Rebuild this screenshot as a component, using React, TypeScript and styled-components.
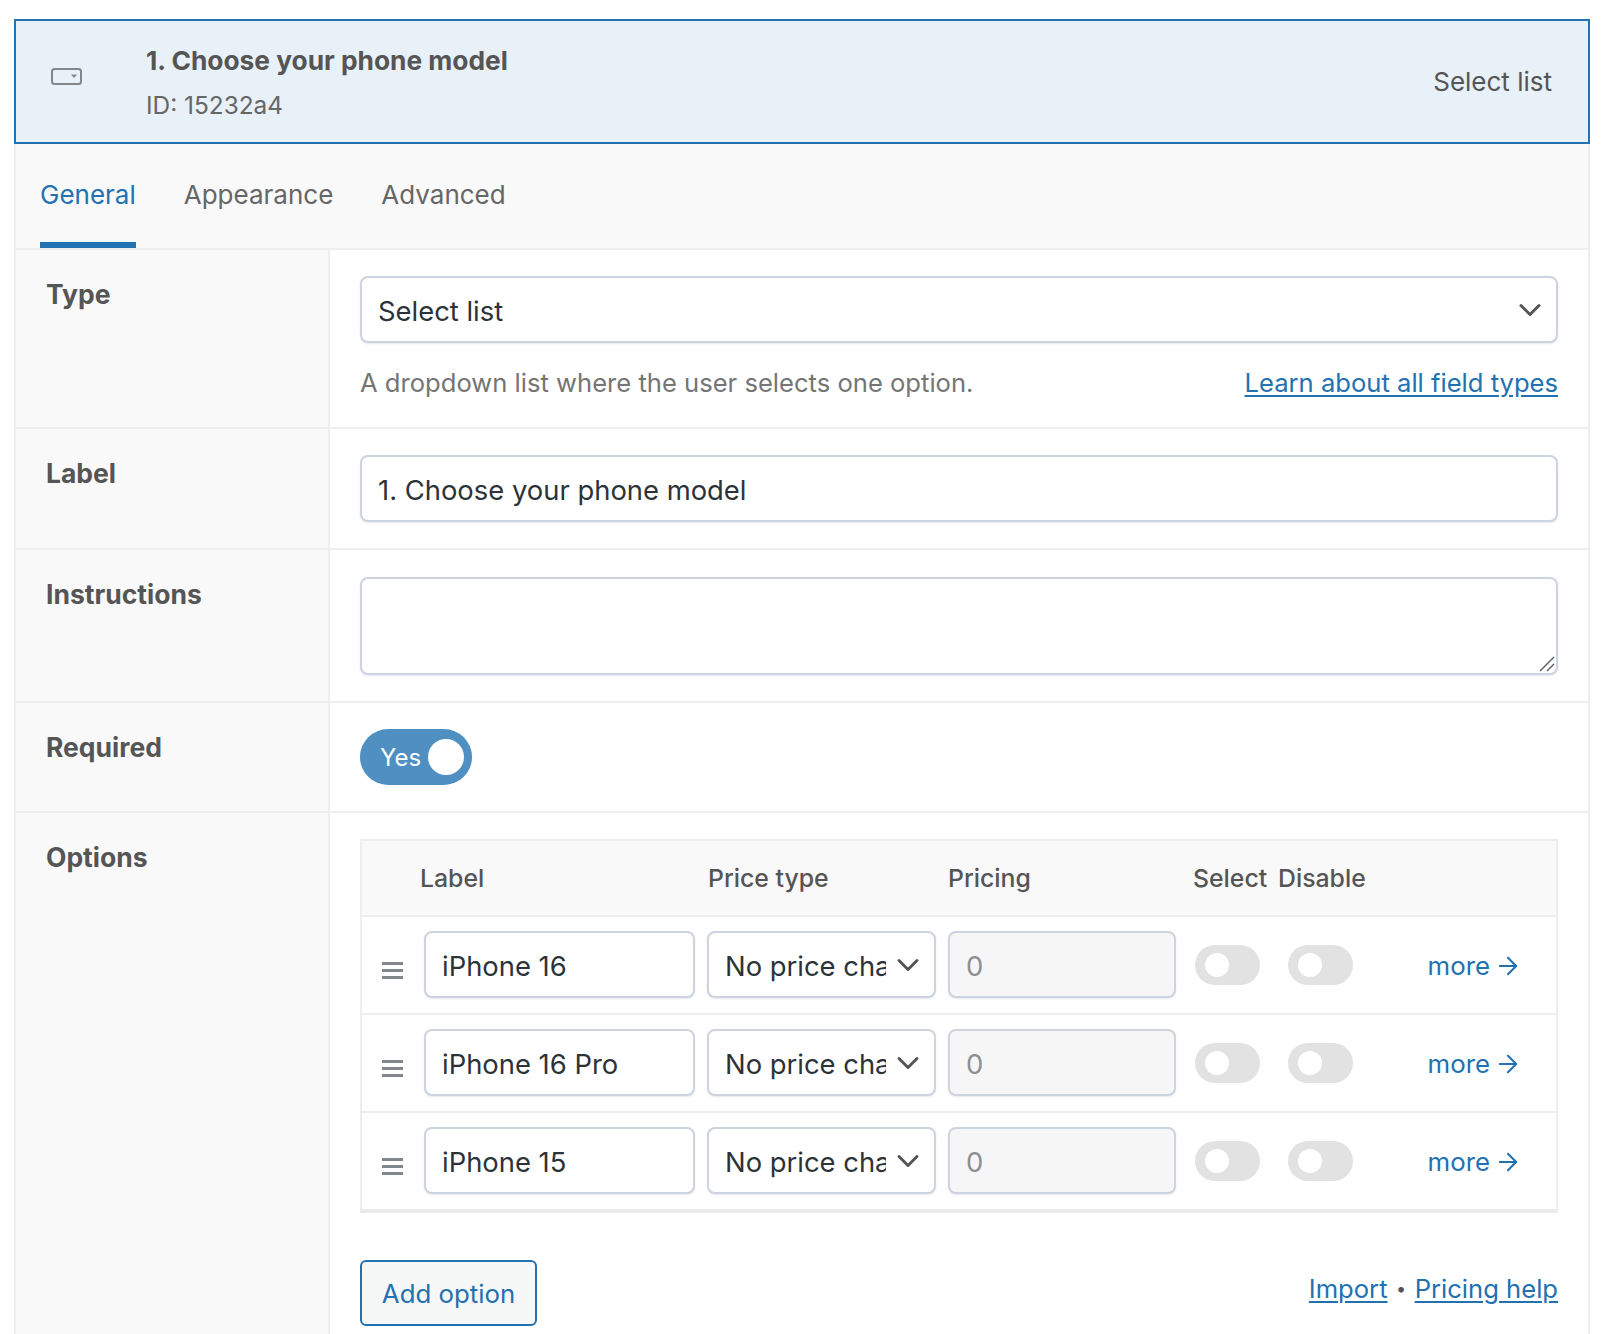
import React from 'react';
import styled, { createGlobalStyle } from 'styled-components';
import { ChevronDown, ArrowRight } from 'lucide-react';

const Global = createGlobalStyle`
  html, body {
    margin: 0;
    height: 1334px;
    overflow: hidden;
    background: #fff;
  }
  body {
    font-family: Inter, 'Noto Sans', sans-serif;
    font-size: 27px;
    color: #555;
    -webkit-font-smoothing: antialiased;
  }
  * { box-sizing: border-box; }
`;

const Page = styled.div`
  padding: 19px 14px 0 14px;
`;

const FieldHeader = styled.div`
  display: flex;
  align-items: center;
  height: 125px;
  padding: 0 36px 0 35px;
  background: #e8f0f8;
  border: 2px solid #2271b1;
  color: #555;
`;

const FieldIcon = styled.svg`
  width: 31px;
  height: 17px;
  margin: 0 64px 10px 0;
  flex: none;
`;

const FieldTitle = styled.div`
  flex: 1;
  display: flex;
  flex-direction: column;
  gap: 13px;
  margin-top: 2px;

  strong {
    font-size: 26.3px;
    font-weight: 700;
    line-height: 32px;
  }
  span {
    font-size: 24.4px;
    line-height: 30px;
    color: #666;
  }
`;

const FieldType = styled.div`
  font-size: 26px;
  color: #555;
`;

const Panel = styled.div`
  border-left: 2px solid #eeeeee;
  border-right: 2px solid #eeeeee;
  background: #fff;
`;

const Tabs = styled.div`
  display: flex;
  gap: 48px;
  height: 106px;
  padding: 0 24px;
  background: #f9f9f9;
  border-bottom: 2px solid #eeeeee;
`;

const Tab = styled.div<{ $active?: boolean }>`
  display: flex;
  align-items: center;
  height: 100%;
  padding-top: 2px;
  font-size: 26px;
  color: ${p => (p.$active ? '#2271b1' : '#666')};
  border-bottom: 6px solid ${p => (p.$active ? '#2271b1' : 'transparent')};
`;

const Row = styled.div`
  display: grid;
  grid-template-columns: 314px 1fr;
  border-bottom: 2px solid #eeeeee;
`;

const RowLabel = styled.div`
  padding: 24px 30px;
  background: #f9f9f9;
  border-right: 2px solid #eeeeee;
  font-size: 26.5px;
  font-weight: 700;
  line-height: 40px;
  color: #555;
`;

const RowBody = styled.div<{ $top?: number }>`
  padding: ${p => p.$top ?? 26}px 30px 26px 30px;
`;

const inputBase = `
  display: block;
  width: 100%;
  height: 67px;
  padding: 3px 16px 0;
  font-family: Inter, 'Noto Sans', sans-serif;
  font-size: 27.4px;
  color: #2c3338;
  background: #fff;
  border: 2px solid #cdd4e0;
  border-radius: 8px;
  box-shadow: 0 1px 2px rgba(180, 190, 205, 0.35);
  outline: none;
`;

const TextInput = styled.input`
  ${inputBase}
  &:disabled {
    background: #f6f6f6;
    color: #8c8f94;
    opacity: 1;
  }
`;

const AreaWrap = styled.div`
  position: relative;

  svg {
    position: absolute;
    right: 2px;
    bottom: 2px;
    pointer-events: none;
  }
`;

const TextArea = styled.textarea`
  ${inputBase}
  height: 98px;
  padding: 12px 16px;
  resize: none;
`;

const SelectWrap = styled.div`
  position: relative;

  svg {
    position: absolute;
    top: 50%;
    right: 10px;
    transform: translateY(-50%);
    color: #555;
    pointer-events: none;
  }
`;

const Select = styled.select`
  ${inputBase}
  appearance: none;
  padding-right: 48px;
`;

const HelpRow = styled.div`
  display: flex;
  justify-content: space-between;
  align-items: center;
  margin-top: 22px;
  line-height: 36px;
  font-size: 25.6px;
  color: #757575;
`;

const TextLink = styled.a`
  color: #2271b1;
  text-decoration: underline;
  text-underline-offset: 3px;
  font-size: 25.6px;
`;

const Switch = styled.div`
  display: flex;
  align-items: center;
  justify-content: space-between;
  width: 112px;
  height: 56px;
  padding: 0 8px 0 20px;
  border-radius: 28px;
  background: #4f8fc2;
  color: #fff;
  font-size: 24px;

  &::after {
    content: '';
    width: 36px;
    height: 36px;
    border-radius: 50%;
    background: #fff;
  }
`;

const OptionTable = styled.div`
  border: 2px solid #eeeeee;
  border-bottom: 4px solid #ebebeb;
`;

const TableHead = styled.div`
  display: grid;
  grid-template-columns: 288px 240px 245px 85px 1fr;
  align-items: center;
  height: 76px;
  padding-left: 58px;
  background: #f9f9f9;
  border-bottom: 2px solid #eeeeee;
  font-size: 24.8px;
  font-weight: 500;
  color: #555;
`;

const OptionRow = styled.div`
  display: grid;
  grid-template-columns: 50px 271px 229px 228px 170px 1fr;
  column-gap: 12px;
  align-items: center;
  padding: 14px 0 15px;
  border-bottom: 2px solid #eeeeee;

  &:last-child {
    border-bottom: none;
  }
`;

const DragHandle = styled.div`
  justify-self: end;
  width: 21px;
  height: 17px;
  margin: 11px 9px 0 0;
  border-top: 3px solid #82878c;
  border-bottom: 3px solid #82878c;
  position: relative;

  &::after {
    content: '';
    position: absolute;
    left: 0;
    right: 0;
    top: 4px;
    height: 3px;
    background: #82878c;
  }
`;

const Toggles = styled.div`
  display: flex;
  gap: 28px;
  padding-left: 7px;
`;

const SmallSwitch = styled.div`
  width: 65px;
  height: 40px;
  border-radius: 20px;
  background: #e2e2e2;
  padding: 8px 10px;

  &::after {
    content: '';
    display: block;
    width: 24px;
    height: 24px;
    border-radius: 50%;
    background: #fff;
  }
`;

const MoreLink = styled.a`
  justify-self: end;
  display: flex;
  align-items: center;
  gap: 4px;
  margin: 2px 34px 0 0;
  font-size: 25.8px;
  color: #2271b1;
  text-decoration: none;
`;

const TableFooter = styled.div`
  display: flex;
  justify-content: space-between;
  align-items: center;
  margin-top: 47px;
  padding-bottom: 40px;
`;

const AddButton = styled.button`
  width: 177px;
  height: 66px;
  font-family: Inter, 'Noto Sans', sans-serif;
  font-size: 25.8px;
  color: #2271b1;
  background: #f6f7f7;
  border: 2px solid #2271b1;
  border-radius: 6px;
`;

const FooterLinks = styled.div`
  display: flex;
  align-items: center;
  gap: 8.5px;
  padding-bottom: 10px;
  color: #555;
  font-size: 18px;
`;

const options = ['iPhone 16', 'iPhone 16 Pro', 'iPhone 15'];

const DropSelect: React.FC<{ value: string }> = ({ value }) => (
  <SelectWrap>
    <Select defaultValue={value}>
      <option>{value}</option>
    </Select>
    <ChevronDown size={36} strokeWidth={2} />
  </SelectWrap>
);

export default function App() {
  return (
    <Page>
      <Global />
      <FieldHeader>
        <FieldIcon viewBox="0 0 31 17" fill="none">
          <rect x="1" y="1" width="29" height="15" rx="2.5" stroke="#82878c" strokeWidth="2" />
          <path d="M20 6.5h6l-3 3.5z" fill="#82878c" />
        </FieldIcon>
        <FieldTitle>
          <strong>1. Choose your phone model</strong>
          <span>ID: 15232a4</span>
        </FieldTitle>
        <FieldType>Select list</FieldType>
      </FieldHeader>
      <Panel>
        <Tabs>
          <Tab $active>General</Tab>
          <Tab>Appearance</Tab>
          <Tab>Advanced</Tab>
        </Tabs>

        <Row>
          <RowLabel>Type</RowLabel>
          <RowBody>
            <DropSelect value="Select list" />
            <HelpRow>
              <span>A dropdown list where the user selects one option.</span>
              <TextLink href="#">Learn about all field types</TextLink>
            </HelpRow>
          </RowBody>
        </Row>

        <Row>
          <RowLabel>Label</RowLabel>
          <RowBody>
            <TextInput defaultValue="1. Choose your phone model" />
          </RowBody>
        </Row>

        <Row>
          <RowLabel>Instructions</RowLabel>
          <RowBody $top={27}>
            <AreaWrap>
              <TextArea />
              <svg width="18" height="18" viewBox="0 0 18 18" fill="none" stroke="#555d66" strokeWidth="1.4">
                <path d="M2 16L16 2M9 16l7-7" />
              </svg>
            </AreaWrap>
          </RowBody>
        </Row>

        <Row>
          <RowLabel>Required</RowLabel>
          <RowBody>
            <Switch>Yes</Switch>
          </RowBody>
        </Row>

        <Row>
          <RowLabel>Options</RowLabel>
          <RowBody>
            <OptionTable>
              <TableHead>
                <span>Label</span>
                <span>Price type</span>
                <span>Pricing</span>
                <span>Select</span>
                <span>Disable</span>
              </TableHead>
              {options.map(name => (
                <OptionRow key={name}>
                  <DragHandle />
                  <TextInput defaultValue={name} />
                  <DropSelect value="No price change" />
                  <TextInput disabled defaultValue="0" />
                  <Toggles>
                    <SmallSwitch />
                    <SmallSwitch />
                  </Toggles>
                  <MoreLink href="#">
                    more <ArrowRight size={28} strokeWidth={1.8} />
                  </MoreLink>
                </OptionRow>
              ))}
            </OptionTable>
            <TableFooter>
              <AddButton>Add option</AddButton>
              <FooterLinks>
                <TextLink href="#">Import</TextLink>
                <span>•</span>
                <TextLink href="#">Pricing help</TextLink>
              </FooterLinks>
            </TableFooter>
          </RowBody>
        </Row>
      </Panel>
    </Page>
  );
}
